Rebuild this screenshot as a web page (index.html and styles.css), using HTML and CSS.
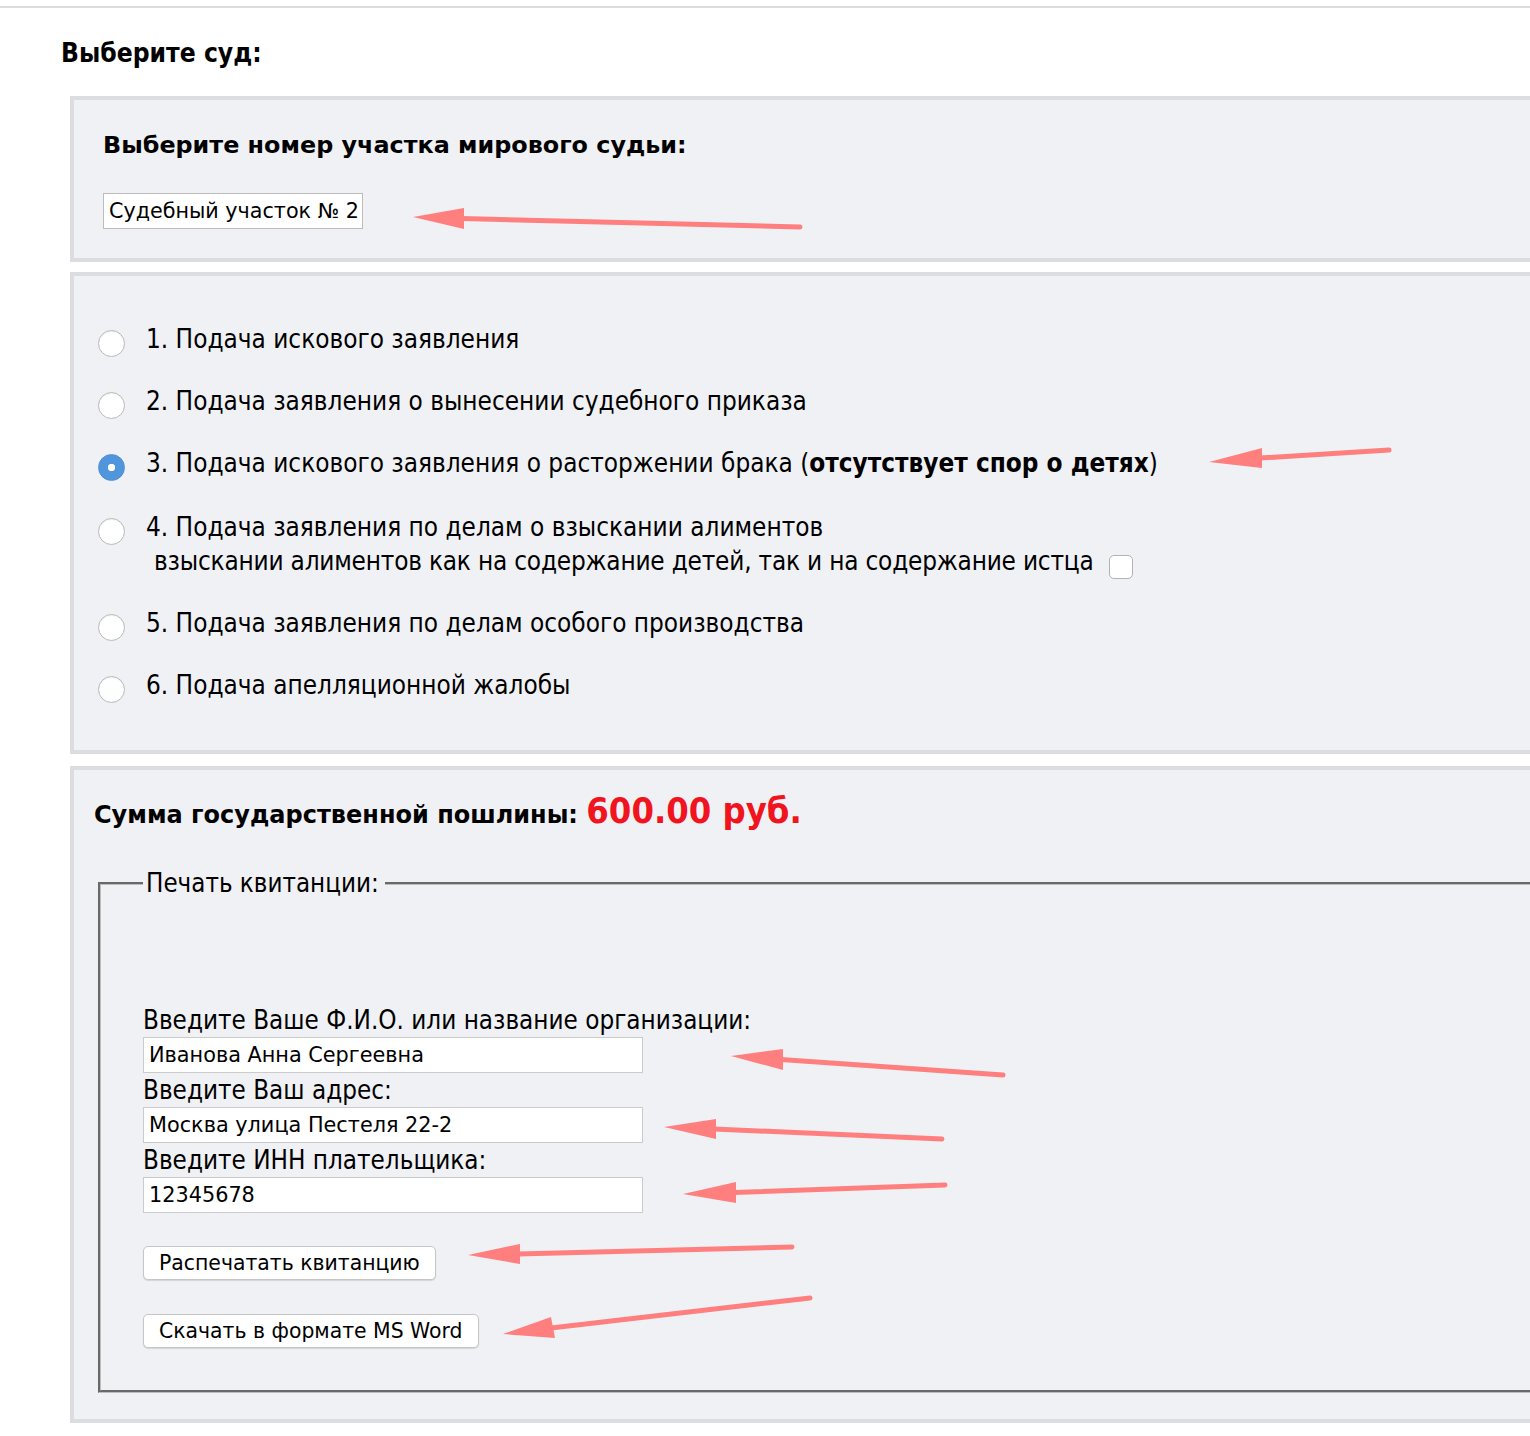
FILE: index.html
```html
<!DOCTYPE html>
<html lang="ru">
<head>
<meta charset="utf-8">
<title>Выберите суд</title>
<link rel="stylesheet" href="styles.css">
</head>
<body>
<div class="topline"></div>
<h1 class="title">Выберите суд:</h1>

<section class="panel panel-court">
  <h2 class="panel-title">Выберите номер участка мирового судьи:</h2>
  <select class="court-select"><option>Судебный участок № 2</option></select>
</section>

<section class="panel panel-types">
  <ul class="types">
    <li class="type"><input type="radio" name="type" class="radio"><span class="type-text">1. Подача искового заявления</span></li>
    <li class="type"><input type="radio" name="type" class="radio"><span class="type-text">2. Подача заявления о вынесении судебного приказа</span></li>
    <li class="type"><input type="radio" name="type" class="radio" checked><span class="type-text">3. Подача искового заявления о расторжении брака (<b>отсутствует спор о детях</b>)</span></li>
    <li class="type type-multi"><input type="radio" name="type" class="radio"><span class="type-text"><span class="type-line">4. Подача заявления по делам о взыскании алиментов</span><span class="type-line type-sub">взыскании алиментов как на содержание детей, так и на содержание истца <input type="checkbox" class="check"></span></span></li>
    <li class="type"><input type="radio" name="type" class="radio"><span class="type-text">5. Подача заявления по делам особого производства</span></li>
    <li class="type"><input type="radio" name="type" class="radio"><span class="type-text">6. Подача апелляционной жалобы</span></li>
  </ul>
</section>

<section class="panel panel-fee">
  <p class="fee">Сумма государственной пошлины: <span class="fee-amount">600.00 руб.</span></p>
  <fieldset class="receipt">
    <legend class="receipt-legend">Печать квитанции:</legend>
    <label class="field-label">Введите Ваше Ф.И.О. или название организации:</label>
    <input class="field-input" type="text" value="Иванова Анна Сергеевна">
    <label class="field-label">Введите Ваш адрес:</label>
    <input class="field-input" type="text" value="Москва улица Пестеля 22-2">
    <label class="field-label">Введите ИНН плательщика:</label>
    <input class="field-input" type="text" value="12345678">
    <button class="btn btn-print" type="button">Распечатать квитанцию</button>
    <button class="btn btn-word" type="button">Скачать в формате MS Word</button>
  </fieldset>
</section>

<svg class="annotations" width="1530" height="1436" viewBox="0 0 1530 1436">
  <g class="arrow">
    <line x1="800" y1="227" x2="462" y2="218.5"/>
    <polygon points="413,217 464,208 464,229"/>
  </g>
  <g class="arrow">
    <line x1="1389" y1="450" x2="1260" y2="458"/>
    <polygon points="1209,462 1262,448 1262,468"/>
  </g>
  <g class="arrow">
    <line x1="1003" y1="1075" x2="781" y2="1059.5"/>
    <polygon points="731,1056 783,1049 783,1070"/>
  </g>
  <g class="arrow">
    <line x1="942" y1="1139" x2="714" y2="1129"/>
    <polygon points="664,1127 716,1119 716,1139"/>
  </g>
  <g class="arrow">
    <line x1="945" y1="1185" x2="734" y2="1192.5"/>
    <polygon points="683,1194 736,1182 736,1203"/>
  </g>
  <g class="arrow">
    <line x1="792" y1="1247" x2="518" y2="1254"/>
    <polygon points="468,1255 520,1244 520,1264"/>
  </g>
  <g class="arrow">
    <line x1="810" y1="1298" x2="551" y2="1328"/>
    <polygon points="503,1334 551,1317 555,1338"/>
  </g>
</svg>
</body>
</html>
```

FILE: styles.css
```css
html {
  overflow: hidden;
}

body {
  margin: 0;
  background: #ffffff;
  color: #000000;
  font-family: "DejaVu Sans Condensed", "DejaVu Sans", sans-serif;
  font-stretch: condensed;
  position: relative;
  width: 1530px;
  height: 1436px;
}

.topline {
  margin-top: 6px;
  height: 2px;
  background: #dcdce0;
}

.title {
  margin: 29px 0 0 61px;
  font-size: 26.2px;
  line-height: 32px;
  font-weight: bold;
}

.panel {
  box-sizing: border-box;
  margin-left: 70px;
  border: 4px solid #dcdde1;
  border-right: none;
  background: #f0f1f5;
}

.panel-court {
  margin-top: 27px;
  padding: 30px 0 29px 29px;
}

.panel-title {
  margin: 0;
  font-family: "DejaVu Sans", sans-serif;
  font-stretch: normal;
  font-size: 23.85px;
  line-height: 30px;
  font-weight: bold;
}

.court-select {
  display: block;
  margin: 33px 0 0;
  box-sizing: border-box;
  width: 260px;
  height: 36px;
  padding: 0 4px 0 5px;
  appearance: none;
  -webkit-appearance: none;
  border: 1px solid #bcbcbc;
  border-radius: 0;
  background: #ffffff;
  color: #000;
  font-family: "DejaVu Sans", sans-serif;
  font-stretch: normal;
  font-size: 20.7px;
}

.panel-types {
  margin-top: 10px;
  padding: 46px 0 47px 24px;
}

.types {
  list-style: none;
  margin: 0;
  padding: 0;
  display: flex;
  flex-direction: column;
  gap: 27px;
}

.type {
  display: flex;
  align-items: flex-start;
  font-size: 25.9px;
  line-height: 34px;
}

.type-multi {
  margin-top: 2px;
}

.radio {
  appearance: none;
  -webkit-appearance: none;
  flex: none;
  box-sizing: border-box;
  width: 27px;
  height: 27px;
  margin: 8px 21px 0 0;
  border: 1px solid #b9b9b9;
  border-radius: 50%;
  background: #ffffff;
  box-shadow: inset 0 1px 1px rgba(0, 0, 0, 0.06);
}

.radio:checked {
  border-color: #4d8fd4;
  background: radial-gradient(circle, #ffffff 0 3.4px, #5196dc 4px);
  box-shadow: none;
}

.type-text b {
  font-weight: bold;
}

.type-line {
  display: block;
}

.type-sub {
  padding-left: 8px;
  letter-spacing: -0.2px;
}

.check {
  appearance: none;
  -webkit-appearance: none;
  box-sizing: border-box;
  width: 24px;
  height: 24px;
  margin: 0 0 0 8px;
  vertical-align: -9px;
  border: 1px solid #b3b3b3;
  border-radius: 5px;
  background: #ffffff;
}

.panel-fee {
  margin-top: 12px;
  padding: 21px 0 0 20px;
}

.fee {
  margin: 0;
  font-family: "DejaVu Sans", sans-serif;
  font-stretch: normal;
  font-size: 24px;
  line-height: 40px;
  font-weight: bold;
}

.fee-amount {
  font-family: "DejaVu Sans Condensed", "DejaVu Sans", sans-serif;
  font-stretch: condensed;
  font-size: 36px;
  color: #f0141e;
}

.receipt {
  margin: 33px 0 26px 4px;
  padding: 105px 0 42px 42px;
  border: 3px groove #bdbdbd;
  border-right: none;
  min-width: 0;
}

.receipt-legend {
  padding: 0 6px 0 3px;
  font-size: 25.7px;
  line-height: 30px;
}

.field-label {
  display: block;
  font-size: 25.8px;
  line-height: 34px;
}

.field-input {
  display: block;
  box-sizing: border-box;
  width: 500px;
  height: 36px;
  margin: 0;
  padding: 0 5px;
  border: 1px solid #cbcbcb;
  border-radius: 0;
  background: #ffffff;
  color: #000;
  font-family: "DejaVu Sans", sans-serif;
  font-stretch: normal;
  font-size: 20.8px;
}

.btn {
  display: block;
  box-sizing: border-box;
  height: 34px;
  padding: 0 15px;
  border: 1px solid #c6c6c6;
  border-radius: 5px;
  background: #ffffff;
  box-shadow: 0 1px 1px rgba(0, 0, 0, 0.12);
  color: #000;
  font-family: "DejaVu Sans", sans-serif;
  font-stretch: normal;
  font-size: 20.4px;
}

.btn-print {
  margin-top: 33px;
}

.btn-word {
  margin-top: 34px;
}

.annotations {
  position: absolute;
  left: 0;
  top: 0;
  pointer-events: none;
}

.arrow line {
  stroke: #ff7f7f;
  stroke-width: 5;
  stroke-linecap: round;
}

.arrow polygon {
  fill: #ff7f7f;
}
```
